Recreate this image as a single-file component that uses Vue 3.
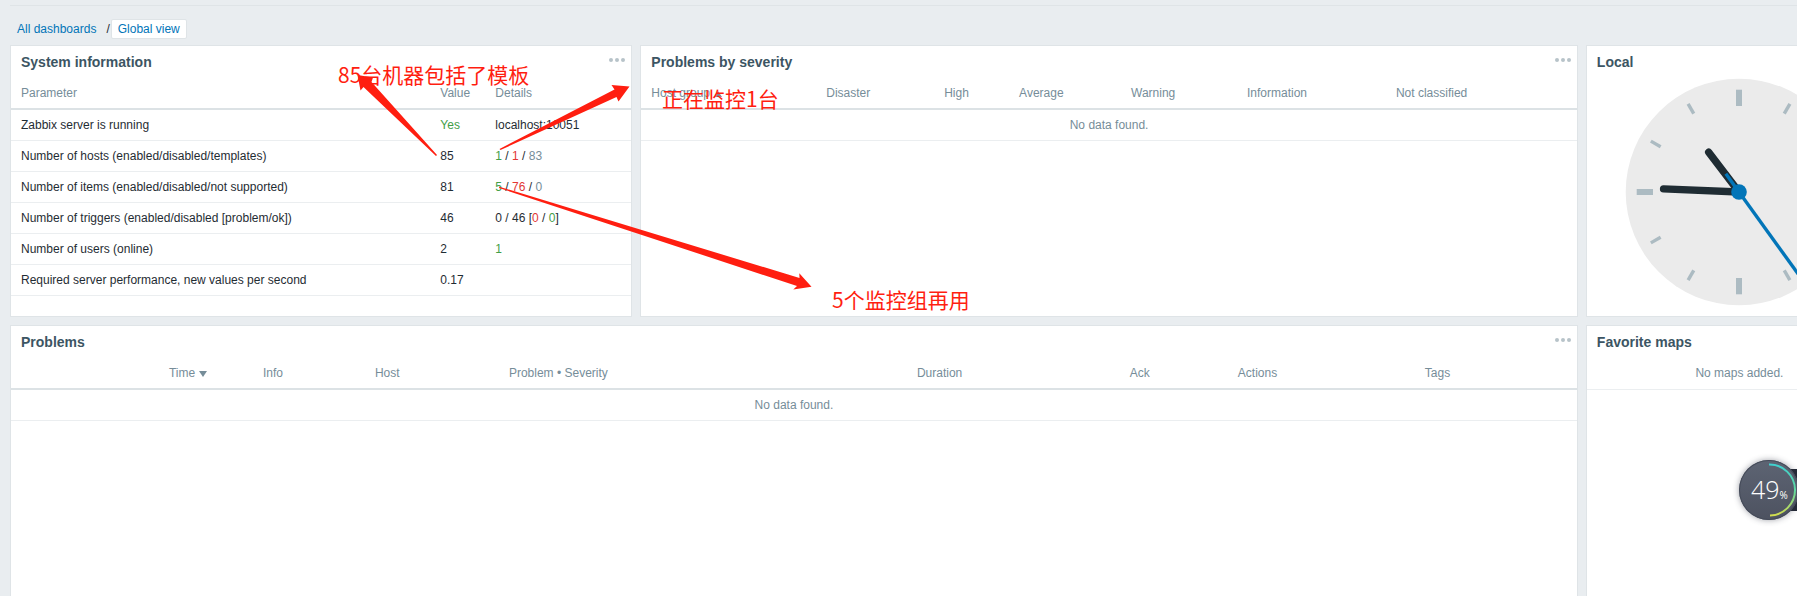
<script setup>
const severityColumns = [
  { label: 'Host group', width: 175, sort: 'up' },
  { label: 'Disaster', width: 118 },
  { label: 'High', width: 75 },
  { label: 'Average', width: 112 },
  { label: 'Warning', width: 116 },
  { label: 'Information', width: 149 },
  { label: 'Not classified', width: 191 },
]

const problemColumns = [
  { label: '', width: 148 },
  { label: 'Time', width: 94, sort: 'down' },
  { label: 'Info', width: 112 },
  { label: 'Host', width: 134 },
  { label: 'Problem • Severity', width: 408 },
  { label: 'Duration', width: 213 },
  { label: 'Ack', width: 108 },
  { label: 'Actions', width: 187 },
  { label: 'Tags', width: 162 },
]

const share = (columns, column) => {
  const total = columns.reduce((sum, c) => sum + c.width, 0)
  return { width: `${(column.width / total) * 100}%` }
}

const systemRows = [
  { name: 'Zabbix server is running', value: 'Yes', tone: 'green', details: [['localhost:10051', '']] },
  {
    name: 'Number of hosts (enabled/disabled/templates)',
    value: '85',
    details: [['1', 'green'], [' / ', ''], ['1', 'red'], [' / ', ''], ['83', 'grey']],
  },
  {
    name: 'Number of items (enabled/disabled/not supported)',
    value: '81',
    details: [['5', 'green'], [' / ', ''], ['76', 'red'], [' / ', ''], ['0', 'grey']],
  },
  {
    name: 'Number of triggers (enabled/disabled [problem/ok])',
    value: '46',
    details: [['0 / 46 [', ''], ['0', 'red'], [' / ', ''], ['0', 'green'], [']', '']],
  },
  { name: 'Number of users (online)', value: '2', details: [['1', 'green']] },
  { name: 'Required server performance, new values per second', value: '0.17', details: [] },
]

const hours = Array.from({ length: 12 }, (_, i) => ({ angle: i * 30, major: i % 3 === 0 }))
</script>

<template>
  <div class="page">
    <div class="topline"></div>
    <nav class="crumbs" aria-label="Dashboards">
      <a href="#all">All dashboards</a>
      <span class="slash">/</span>
      <a href="#global" class="current">Global view</a>
    </nav>

    <main class="grid">
      <section class="card span4">
        <header class="head">
          <h4>System information</h4>
          <button type="button" class="more" aria-label="System information actions"><i></i><i></i><i></i></button>
        </header>
        <table>
          <colgroup>
            <col />
            <col class="col-value" />
            <col class="col-details" />
          </colgroup>
          <thead>
            <tr><th>Parameter</th><th>Value</th><th>Details</th></tr>
          </thead>
          <tbody>
            <tr v-for="row in systemRows" :key="row.name">
              <td>{{ row.name }}</td>
              <td :class="row.tone">{{ row.value }}</td>
              <td class="pre"><span v-for="(part, i) in row.details" :key="i" :class="part[1]">{{ part[0] }}</span></td>
            </tr>
          </tbody>
        </table>
      </section>

      <section class="card span6">
        <header class="head">
          <h4>Problems by severity</h4>
          <button type="button" class="more" aria-label="Problems by severity actions"><i></i><i></i><i></i></button>
        </header>
        <table>
          <colgroup>
            <col v-for="c in severityColumns" :key="c.label" :style="share(severityColumns, c)" />
          </colgroup>
          <thead>
            <tr>
              <th v-for="c in severityColumns" :key="c.label">{{ c.label }}<span v-if="c.sort" class="sort" :class="c.sort"></span></th>
            </tr>
          </thead>
          <tbody>
            <tr><td :colspan="severityColumns.length" class="empty">No data found.</td></tr>
          </tbody>
        </table>
      </section>

      <section class="card span2">
        <header class="head"><h4>Local</h4></header>
        <div class="clock">
          <svg width="228" height="228" viewBox="-114 -114 228 228" role="img" aria-label="Clock">
            <circle r="113.3" fill="#ebebeb" />
            <g v-for="h in hours" :key="h.angle" :transform="`rotate(${h.angle})`" fill="#acbbc2">
              <rect v-if="h.major" x="-3" y="-102.3" width="6" height="16.3" />
              <rect v-else x="-1.7" y="-101.8" width="3.4" height="11.3" />
            </g>
            <g stroke="#1f2c33" stroke-width="7.4" stroke-linecap="round">
              <line x1="0" y1="0" x2="0" y2="-50" transform="rotate(-37.3)" />
              <line x1="0" y1="0" x2="0" y2="-75.5" transform="rotate(-87.6)" />
            </g>
            <line x1="0" y1="22.5" x2="0" y2="-102" stroke="#0275b8" stroke-width="3.4" transform="rotate(144.2)" />
            <circle r="7.8" fill="#0275b8" />
          </svg>
        </div>
      </section>

      <section class="card span10">
        <header class="head">
          <h4>Problems</h4>
          <button type="button" class="more" aria-label="Problems actions"><i></i><i></i><i></i></button>
        </header>
        <table>
          <colgroup>
            <col v-for="c in problemColumns" :key="c.label" :style="share(problemColumns, c)" />
          </colgroup>
          <thead>
            <tr>
              <th v-for="c in problemColumns" :key="c.label">{{ c.label }}<span v-if="c.sort" class="sort" :class="c.sort"></span></th>
            </tr>
          </thead>
          <tbody>
            <tr><td :colspan="problemColumns.length" class="empty">No data found.</td></tr>
          </tbody>
        </table>
      </section>

      <section class="card span2">
        <header class="head"><h4>Favorite maps</h4></header>
        <p class="nomaps">No maps added.</p>
      </section>
    </main>

    <svg class="arrows" width="840" height="320" viewBox="0 0 840 320" fill="#ff1e10" aria-hidden="true">
      <path d="M357.5 75 L373 77.5 L371.5 82 L437 155 L436 156 L363.5 87 L360.5 90.5 Z" />
      <path d="M629.5 86.5 L611.5 85 L614.5 89.5 L499.5 149 L500.5 150 L616.5 97 L618.5 101.5 Z" />
      <path d="M811.5 286.8 L799.3 273.3 L799.5 278 L499.3 186.7 L499 188 L797 286 L793.3 289.5 Z" />
    </svg>
    <span class="note note-hosts">85台机器包括了模板</span>
    <span class="note note-active">正在监控1台</span>
    <span class="note note-items">5个监控组再用</span>

    <aside class="gauge" aria-label="Usage 49%">
      <div class="tab"></div>
      <div class="ball">
        <svg width="60" height="60" viewBox="-30 -30 60 60" fill="none" aria-hidden="true">
          <defs>
            <linearGradient id="arc" x1="0" y1="-26" x2="0" y2="26" gradientUnits="userSpaceOnUse">
              <stop offset="0" stop-color="#3fd0d0" />
              <stop offset="0.5" stop-color="#5fd8a0" />
              <stop offset="1" stop-color="#d3dc4c" />
            </linearGradient>
          </defs>
          <path d="M0 -25.5 A25.5 25.5 0 0 1 1 25.5" stroke="url(#arc)" stroke-width="2" />
        </svg>
        <span class="reading">49<small>%</small></span>
      </div>
    </aside>
  </div>
</template>

<style>
body {
  margin: 0;
  background: #e9edf0;
}
</style>

<style scoped>
.page {
  position: relative;
  height: 100vh;
  overflow: hidden;
  box-sizing: border-box;
  padding-left: 10px;
  background: #e9edf0;
  color: #1f2c33;
  font: 12px/14px "Liberation Sans", Arial, sans-serif;
}
.topline {
  height: 1px;
  margin-top: 5px;
  background: #dfe4e7;
}
.crumbs {
  display: flex;
  align-items: center;
  height: 20px;
  margin: 13px 0 6px;
  padding-left: 7px;
}
.crumbs a {
  color: #0275b8;
  text-decoration: none;
}
.slash {
  margin: 0 1px 0 10px;
}
.crumbs .current {
  padding: 2px 6px;
  border: 1px solid #dfe4e7;
  border-radius: 2px;
  background: #fff;
}
.grid {
  display: grid;
  grid-template-columns: repeat(12, minmax(0, 1fr));
  grid-template-rows: 272px 344px;
  gap: 8px;
  width: calc(100% + 96px);
}
.span2 { grid-column: span 2; }
.span4 { grid-column: span 4; }
.span6 { grid-column: span 6; }
.span10 { grid-column: span 10; }
.card {
  display: flex;
  flex-direction: column;
  border: 1px solid #dfe4e7;
  background: #fff;
}
.head {
  display: flex;
  align-items: center;
  justify-content: space-between;
  flex: none;
  height: 32px;
  padding: 0 5px 0 10px;
}
h4 {
  margin: 0;
  color: #3c5563;
  font-size: 14px;
  line-height: 16px;
}
.more {
  display: flex;
  gap: 2px;
  padding: 0 1px 4px 4px;
  border: 0;
  background: none;
}
.more i {
  width: 4px;
  height: 4px;
  border-radius: 50%;
  background: #b7c3c9;
}
table {
  width: 100%;
  border-collapse: separate;
  border-spacing: 0;
  table-layout: fixed;
}
.col-value { width: 55px; }
.col-details { width: 146px; }
th,
td {
  box-sizing: border-box;
  padding: 0 0 0 10px;
  text-align: left;
  vertical-align: middle;
  white-space: nowrap;
}
th {
  height: 32px;
  border-bottom: 2px solid #dce2e5;
  color: #768d99;
  font-weight: normal;
}
td {
  height: 31px;
  border-bottom: 1px solid #ebeef0;
}
td.empty {
  padding: 0;
  color: #768d99;
  text-align: center;
}
.pre { white-space: pre; }
.green { color: #429e47; }
.red { color: #e33734; }
.grey { color: #768d99; }
.sort {
  display: inline-block;
  margin-left: 4px;
  border: 4px solid transparent;
}
.sort.down {
  border-top: 6px solid #768d99;
  border-bottom: 0;
}
.sort.up {
  border-bottom: 6px solid #768d99;
  border-top: 0;
}
.clock {
  display: flex;
  justify-content: center;
}
.clock svg { flex: none; }
.nomaps {
  margin: 0;
  border-bottom: 1px solid #ebeef0;
  color: #768d99;
  line-height: 31px;
  text-align: center;
}
.arrows {
  position: absolute;
  top: 0;
  left: 0;
}
.note {
  position: absolute;
  color: #ff1e10;
  font: 400 21px/24px "Noto Sans CJK SC", sans-serif;
  white-space: nowrap;
}
.note-hosts { top: 62px; left: 338px; }
.note-active { top: 86px; left: 662px; }
.note-items { top: 287px; left: 832px; }
.gauge {
  position: absolute;
  top: 460px;
  right: -2px;
  width: 60px;
  height: 60px;
}
.tab {
  position: absolute;
  top: 9px;
  right: 0;
  width: 16px;
  height: 42px;
  background: #262b38;
}
.ball {
  position: relative;
  width: 60px;
  height: 60px;
  border-radius: 50%;
  background: linear-gradient(#5d6473, #4d5260);
  box-shadow: inset 0 0 0 1px #454b59, 0 0 6px rgba(40, 45, 60, 0.45);
}
.ball svg {
  position: absolute;
  top: 0;
  left: 0;
}
.reading {
  position: absolute;
  top: 15px;
  left: 12px;
  color: #fff;
  font: 300 25px/28px "Open Sans", sans-serif;
  white-space: nowrap;
}
.reading small {
  font-size: 10px;
  font-weight: 400;
}
</style>
